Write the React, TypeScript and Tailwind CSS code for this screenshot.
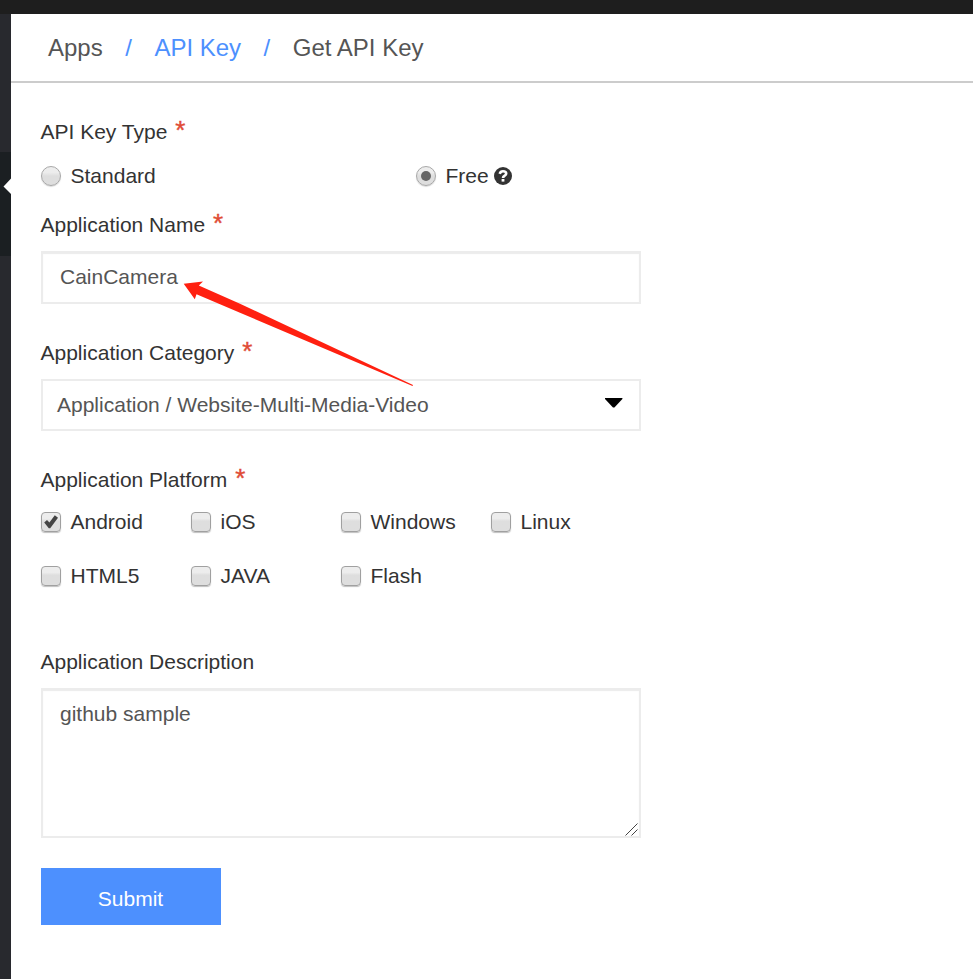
import type { ReactNode } from "react";

function Label({ children, required }: { children: ReactNode; required?: boolean }) {
  return (
    <div className="-ml-[0.5px] flex h-[30px] items-center whitespace-nowrap leading-[30px]">
      <span>{children}</span>
      {required && (
        <span className="-mt-[5px] ml-2 text-[26px] leading-[30px] text-[#e04b35] [-webkit-text-stroke:0.4px_#e04b35]">*</span>
      )}
    </div>
  );
}

function Radio({ checked }: { checked?: boolean }) {
  return (
    <span className="flex size-5 shrink-0 items-center justify-center rounded-full border border-[#a8a8a8] bg-linear-to-b from-[#ededed] from-30% to-[#dedede] to-50% shadow-[0_1px_1px_rgba(0,0,0,0.15)]">
      {checked && <span className="size-2.5 rounded-full bg-[#666]" />}
    </span>
  );
}

function Checkbox({ label, checked }: { label: string; checked?: boolean }) {
  return (
    <label className="flex h-[30px] w-[150px] items-center leading-[30px]">
      <span className="mr-2.5 flex size-[19.5px] shrink-0 items-center justify-center rounded-[4px] border border-[#a0a0a0] bg-linear-to-b from-[#ededed] from-30% to-[#dedede] to-45% shadow-[0_1px_1px_rgba(0,0,0,0.25)]">
        {checked && (
          <svg viewBox="0 0 16 16" className="size-4 shrink-0">
            <path d="M1.2 8.5 L4 6 L6.4 8.4 L11.8 1.2 L15 3.8 L7.2 14.3 L5.8 14.3 Z" fill="#444" />
          </svg>
        )}
      </span>
      <span>{label}</span>
    </label>
  );
}

export default function App() {
  return (
    <div className="flex h-[979px] w-[973px] flex-col overflow-hidden bg-white font-['Liberation_Sans',Arial,sans-serif] text-[21px] text-[#333]">
      <div className="h-3.5 shrink-0 bg-[#1e1e1e]" />
      <div className="flex min-h-0 flex-1">
        <aside className="flex w-[11px] shrink-0 flex-col bg-[#28292e]">
          <div className="mt-[138px] flex h-[104px] justify-end bg-[#1b1f22] pt-[26px]">
            <svg viewBox="0 0 8 16" className="h-4 w-2">
              <path d="M8 0.5 L0.5 8.5 L8 16 Z" fill="#fff" />
            </svg>
          </div>
        </aside>
        <main className="flex-1">
          <header className="flex h-[69px] items-center border-b-2 border-[#ccc] pl-[37px] text-2xl text-[#555]">
            <span>Apps</span>
            <span className="ml-[22.5px] text-[#4d90fe]">/</span>
            <span className="ml-[22.5px] text-[#4d90fe]">API Key</span>
            <span className="ml-[22.5px] text-[#4d90fe]">/</span>
            <span className="ml-[22.5px]">Get API Key</span>
          </header>
          <form className="relative w-[630px] pl-[30px] pt-[34px]">
            <Label required>API Key Type</Label>
            <div className="mt-3.5 flex h-[30px] leading-[30px]">
              <label className="flex w-[375px] items-center gap-[9.5px]">
                <Radio />
                <span>Standard</span>
              </label>
              <label className="flex items-center">
                <Radio checked />
                <span className="ml-[9.5px]">Free</span>
                <svg viewBox="0 0 18 18" className="ml-[5px] size-[18px]">
                  <circle cx="9" cy="9" r="9" fill="#333" />
                  <path d="M5.7 6.8 C6.2 5 7.3 4.3 9 4.3 C11 4.3 12.2 5.2 12.2 6.7 C12.2 8.7 9 8.4 9 10.9" fill="none" stroke="#fff" strokeWidth="2.6" />
                  <rect x="7.6" y="12" width="2.8" height="2.6" fill="#fff" />
                </svg>
              </label>
            </div>
            <div className="mt-[19px]">
              <Label required>Application Name</Label>
            </div>
            <div className="mt-[11px] flex h-[53px] w-[600px] items-center border-2 border-[#ececec] pb-0.5 pl-[17px] text-[#555] shadow-[inset_0_1px_1px_#ececec]">
              CainCamera
            </div>
            <div className="mt-[34px]">
              <Label required>Application Category</Label>
            </div>
            <div className="mt-[11px] flex h-[52px] w-[600px] items-center justify-between border-2 border-[#ececec] pl-3.5 pr-4 text-[#555]">
              <span>Application / Website-Multi-Media-Video</span>
              <svg viewBox="0 0 18 10" className="mb-1 h-2.5 w-[18px]">
                <path d="M0 0 H17.4 V1 L9.4 9.5 H8 L0 1 Z" fill="#000" />
              </svg>
            </div>
            <div className="mt-[34px]">
              <Label required>Application Platform</Label>
            </div>
            <div className="mt-3 flex flex-wrap gap-y-6">
              <Checkbox label="Android" checked />
              <Checkbox label="iOS" />
              <Checkbox label="Windows" />
              <Checkbox label="Linux" />
              <Checkbox label="HTML5" />
              <Checkbox label="JAVA" />
              <Checkbox label="Flash" />
            </div>
            <div className="mt-14">
              <Label>Application Description</Label>
            </div>
            <div className="mt-[11px] flex h-[150px] w-[600px] justify-between border-2 border-[#ececec] pl-[17px] pt-[9px] leading-[30px] text-[#555] shadow-[inset_0_1px_1px_#ececec]">
              <span>github sample</span>
              <svg viewBox="0 0 13 13" className="mr-px size-[13px] self-end">
                <path d="M0.5 12.5 L12.5 0.5 M6.5 12.5 L12.5 6.5" stroke="#444" strokeWidth="1" />
              </svg>
            </div>
            <button type="button" className="mt-[30px] flex h-[57px] w-[180px] items-center justify-center bg-[#4d90fe] pr-px pt-1 text-white">
              Submit
            </button>
            <svg viewBox="0 0 232 108" className="pointer-events-none absolute left-[171px] top-[197px] h-[108px] w-[232px]">
              <path d="M1.7 3.7 L21 1.6 L16.8 5.4 L58 23.8 L231 105 L230.5 106 L58 32.8 L14.5 14.3 L12.8 19.3 Z" fill="#ff2010" />
            </svg>
          </form>
        </main>
      </div>
    </div>
  );
}
